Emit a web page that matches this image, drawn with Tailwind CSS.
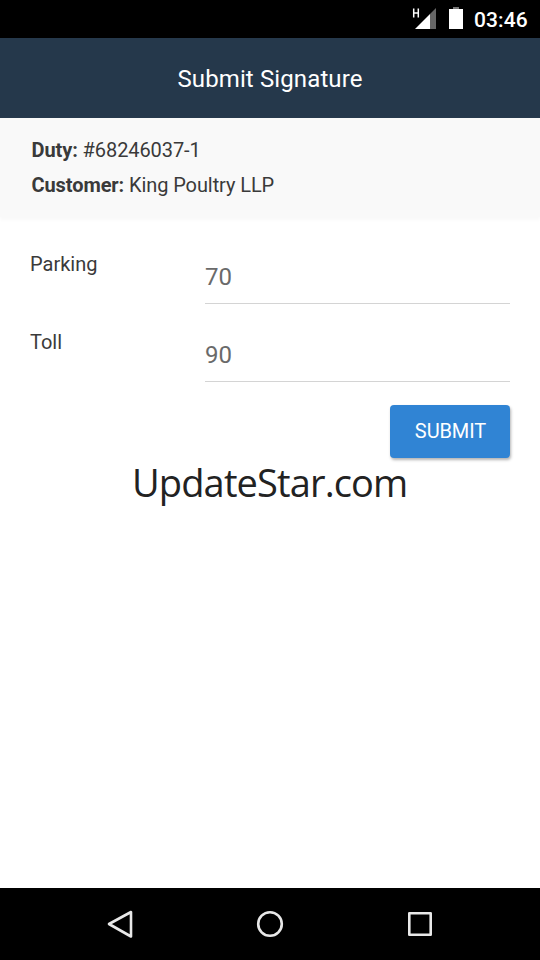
<!DOCTYPE html>
<html lang="en"><head><meta charset="utf-8"><title>Submit Signature</title>
<script src="https://cdn.jsdelivr.net/npm/@tailwindcss/browser@4"></script></head>
<body class="bg-white">
<div class="relative flex h-[960px] w-[540px] flex-col overflow-hidden bg-white font-[Roboto,sans-serif] text-[#3a3a3a]">
<div class="flex h-[38px] items-center justify-end bg-black pr-3 text-white">
<svg class="h-[38px] w-[64px]" viewBox="0 0 64 38"><path d="M3.700 8.500v9M8.300 8.500v9M3.700 13h4.600" stroke="#fff" stroke-width="1.500" fill="none"/><path d="M26 8v21H20V14z" fill="#666"/><path d="M20 14v15H5z" fill="#fff"/><path d="M43 7h6v2h-6z" fill="#777"/><path d="M39 9h14v20H39z" fill="#fff"/></svg>
<span class="w-[54px] pt-0.5 text-[21px] leading-[36px] font-medium tracking-[0.1px] whitespace-nowrap">03:46</span>
</div>
<header class="flex h-20 items-center justify-center bg-[#25384b] pt-0.5 text-[24px] tracking-[0.12px] text-white">Submit Signature</header>
<section class="h-[99px] bg-[#f9f9f9] px-[31.5px] pt-[15px] text-[20px] leading-[35px] tracking-[-0.09px] shadow-[0_3px_3px_#f9f9f9]">
<p><b>Duty:</b> #68246037-1</p><p><b>Customer:</b> King Poultry LLP</p>
</section>
<main class="flex flex-col px-[30px] pt-[35px]">
<div class="flex h-[78px] text-[20px]"><label class="w-[175px] leading-6">Parking</label><div class="mt-[3px] h-[49px] flex-1 border-b border-[#d4d4d4] pt-[8px] text-[24px] leading-7 text-[#6a6a6a]">70</div></div>
<div class="flex h-[75px] text-[20px]"><label class="w-[175px] leading-6">Toll</label><div class="mt-[3px] h-[49px] flex-1 border-b border-[#d4d4d4] pt-[8px] text-[24px] leading-7 text-[#6a6a6a]">90</div></div>
<button class="flex h-[53px] w-[120px] items-center justify-center self-end rounded-[4px] bg-[#3084d4] pb-0.5 pl-px text-[20px] tracking-[-0.1px] text-white shadow-[1px_2px_3px_rgba(0,0,0,0.3)]">SUBMIT</button>
</main>
<div class="absolute top-[456px] left-[132px] font-['Open_Sans',sans-serif] text-[38px] leading-[52px] tracking-[-0.86px] whitespace-nowrap text-[#222]">UpdateStar.com</div>
<nav class="mt-auto flex h-[72px] items-center justify-center bg-black"><svg class="h-[72px] w-[360px]" viewBox="0 0 360 72" fill="none" stroke="#e8e8e8" stroke-width="2.600" stroke-linejoin="round"><path d="M41 24v24.500L19 36z"/><circle cx="180" cy="36" r="11.800"/><rect x="319.300" y="25.300" width="21.400" height="21.400"/></svg></nav>
</div></body></html>
